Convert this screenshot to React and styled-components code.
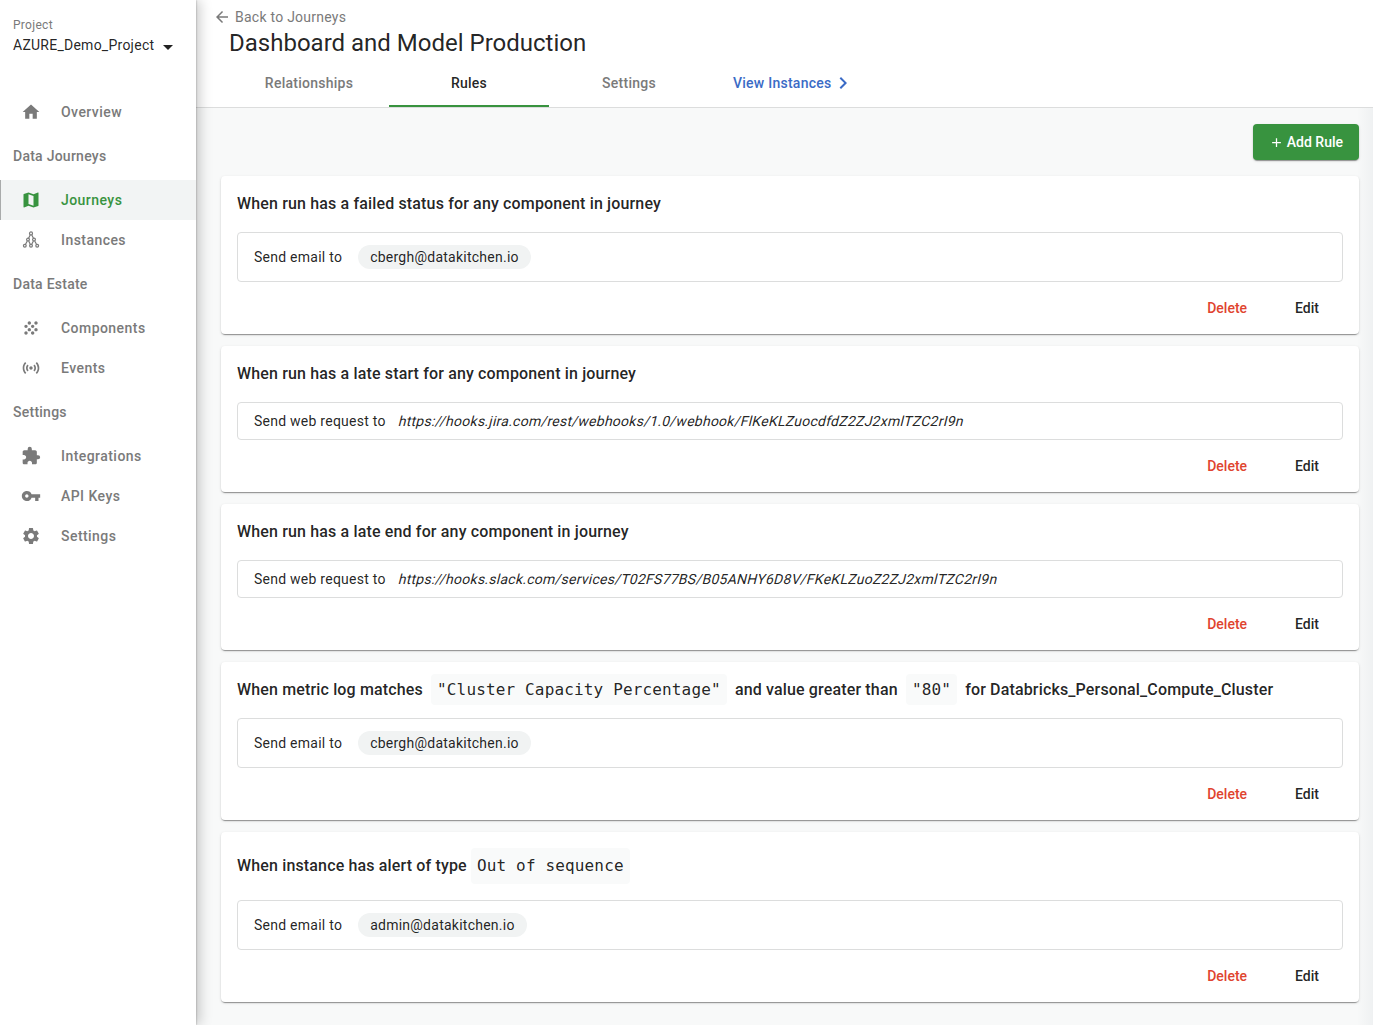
import React from 'react';
import styled, { createGlobalStyle, css } from 'styled-components';
import {
  MdHome, MdMap, MdGrain, MdSensors, MdExtension, MdVpnKey, MdSettings,
  MdArrowBack, MdArrowDropDown, MdChevronRight, MdAdd,
} from 'react-icons/md';

const Global = createGlobalStyle`
  *, *::before, *::after { box-sizing: border-box; }
  body {
    margin: 0;
    font-family: Roboto, "Liberation Sans", sans-serif;
    color: rgba(0, 0, 0, 0.87);
    background: #f8f9f9;
  }
`;

const Layout = styled.div`
  display: flex;
  height: 1025px;
  overflow: hidden;
`;

const Sidebar = styled.nav`
  position: relative;
  z-index: 2;
  flex: 0 0 196px;
  display: flex;
  flex-direction: column;
  background: #fff;
  box-shadow: 0 0 2px rgba(0, 0, 0, 0.35), 4px 0 12px rgba(0, 0, 0, 0.2);
`;

const ProjectPicker = styled.div`
  height: 92px;
  padding: 17px 13px 0;
`;

const ProjectLabel = styled.div`
  font-size: 12px;
  line-height: 16px;
  letter-spacing: 0.3px;
  color: #7a7a7a;
`;

const ProjectName = styled.div`
  display: flex;
  align-items: center;
  gap: 2px;
  height: 20px;
  margin-top: 2px;
  font-size: 14px;
  line-height: 20px;
  letter-spacing: 0.25px;
  white-space: nowrap;

  svg { margin-top: 3px; }
`;

const SectionLabel = styled.div`
  height: 48px;
  padding-left: 13px;
  font-size: 14px;
  font-weight: 500;
  line-height: 48px;
  letter-spacing: 0.25px;
  color: #7a7a7a;
`;

const NavItem = styled.a`
  display: flex;
  align-items: center;
  gap: 20px;
  height: 40px;
  padding-left: 21px;
  font-size: 14px;
  font-weight: 500;
  letter-spacing: 0.45px;
  color: #7a7a7a;

  svg { flex: none; }

  ${(p) => p.$active && css`
    padding-left: 20px;
    border-left: 1px solid #a9abab;
    background: #f2f4f4;
    color: #38933f;
  `}
`;

const Main = styled.main`
  flex: 1;
  min-width: 0;
  display: flex;
  flex-direction: column;
`;

const Header = styled.header`
  height: 108px;
  background: #fff;
  border-bottom: 1px solid #dcdddd;
`;

const BackLink = styled.a`
  display: flex;
  align-items: center;
  gap: 4px;
  padding: 7px 0 0 17px;
  font-size: 14px;
  line-height: 20px;
  letter-spacing: 0.25px;
  color: #7a7a7a;
`;

const Title = styled.h1`
  margin: 0;
  padding-left: 33px;
  font-size: 24px;
  font-weight: 400;
  line-height: 32px;
`;

const Tabs = styled.div`
  display: flex;
  padding-left: 33px;
`;

const Tab = styled.div`
  width: 160px;
  height: 48px;
  border-bottom: 2px solid ${(p) => (p.$active ? '#38933f' : 'transparent')};
  color: ${(p) => (p.$active ? 'rgba(0, 0, 0, 0.87)' : '#7a7a7a')};
  font-size: 14px;
  font-weight: 500;
  line-height: 48px;
  letter-spacing: 0.25px;
  text-align: center;
`;

const InstancesLink = styled.a`
  display: flex;
  align-items: center;
  height: 48px;
  padding-left: 24px;
  font-size: 14px;
  font-weight: 500;
  letter-spacing: 0.25px;
  color: #3a6bc6;
`;

const Content = styled.section`
  flex: 1;
  display: flex;
  flex-direction: column;
  gap: 12px;
  padding: 16px 14px 0 25px;
  background: linear-gradient(to left, #eff1f2, #f8f9f9 16px);
`;

const raised = css`
  box-shadow: 0 3px 1px -2px rgba(0, 0, 0, 0.2), 0 1px 1px rgba(0, 0, 0, 0.2), 0 1px 3px rgba(0, 0, 0, 0.12);
`;

const AddButton = styled.button`
  align-self: flex-end;
  display: flex;
  align-items: center;
  gap: 3px;
  height: 36px;
  margin-bottom: 4px;
  padding: 0 16px;
  border: 0;
  border-radius: 4px;
  background: #38933f;
  color: #fff;
  font: 500 14px Roboto, sans-serif;
  ${raised}
`;

const Card = styled.article`
  padding: 16px 16px 8px;
  border-radius: 4px;
  background: #fff;
  ${raised}
`;

const Condition = styled.h2`
  margin: 0 0 16px;
  font-size: 16px;
  font-weight: 500;
  line-height: 24px;
  letter-spacing: 0.15px;
`;

const Code = styled.code`
  display: ${(p) => (p.$block ? 'inline-block' : 'inline')};
  vertical-align: ${(p) => (p.$block ? 'top' : 'baseline')};
  margin: ${(p) => (p.$block ? '0' : '0 4px')};
  padding: 6px;
  border-radius: 4px;
  background: #f9fafa;
  font-family: "DejaVu Sans Mono", monospace;
  font-size: 16px;
  font-weight: 400;
`;

const BlockCondition = styled(Condition)`
  height: 36px;
  line-height: 36px;

  ${Code} { line-height: 24px; }
`;

const Action = styled.div`
  display: flex;
  align-items: center;
  gap: ${(p) => (p.$tall ? 16 : 12)}px;
  height: ${(p) => (p.$tall ? 50 : 38)}px;
  padding: 0 16px;
  border: 1px solid #dcdddd;
  border-radius: 4px;
  font-size: 14px;
  letter-spacing: 0.25px;
`;

const Chip = styled.span`
  height: 24px;
  padding: 0 12px;
  border-radius: 12px;
  background: #f1f3f3;
  line-height: 24px;
`;

/* Slanted upright glyphs keep the regular-face widths. */
const Url = styled.span`
  display: inline-block;
  transform: skewX(-14deg);
  transform-origin: 0 75%;
`;

const Footer = styled.footer`
  display: flex;
  justify-content: flex-end;
  gap: 16px;
  margin-top: 8px;
  padding-right: 8px;
`;

const TextButton = styled.button`
  height: 36px;
  padding: 0 16px;
  border: 0;
  background: none;
  color: ${(p) => (p.$danger ? '#e0442f' : 'rgba(0, 0, 0, 0.87)')};
  font: 500 14px Roboto, sans-serif;
`;

const TreeIcon = () => (
  <svg width="20" height="20" viewBox="0 0 20 20" fill="none" stroke="currentColor" strokeWidth="1.2">
    <circle cx="10" cy="3.4" r="1.5" />
    <circle cx="7" cy="9.6" r="1.4" />
    <circle cx="13" cy="9.6" r="1.4" />
    <circle cx="3.8" cy="15.8" r="1.4" />
    <circle cx="10" cy="15.8" r="1.4" />
    <circle cx="16.2" cy="15.8" r="1.4" />
    <path d="M9.3 4.8 7.6 8.2M10.7 4.8l1.7 3.4M6.3 10.9 4.4 14.6M13.7 10.9l1.9 3.7M7.7 10.9l1.7 3.6M12.4 10.9l-1.8 3.6" />
  </svg>
);

const NAV = [
  { label: 'Overview', Icon: MdHome },
  { section: 'Data Journeys' },
  { label: 'Journeys', Icon: MdMap, active: true },
  { label: 'Instances', Icon: TreeIcon },
  { section: 'Data Estate' },
  { label: 'Components', Icon: MdGrain },
  { label: 'Events', Icon: MdSensors },
  { section: 'Settings' },
  { label: 'Integrations', Icon: MdExtension },
  { label: 'API Keys', Icon: MdVpnKey },
  { label: 'Settings', Icon: MdSettings },
];

const RULES = [
  {
    condition: <Condition>When run has a failed status for any component in journey</Condition>,
    email: 'cbergh@datakitchen.io',
  },
  {
    condition: <Condition>When run has a late start for any component in journey</Condition>,
    url: 'https://hooks.jira.com/rest/webhooks/1.0/webhook/FlKeKLZuocdfdZ2ZJ2xmlTZC2rI9n',
  },
  {
    condition: <Condition>When run has a late end for any component in journey</Condition>,
    url: 'https://hooks.slack.com/services/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',
  },
  {
    condition: (
      <Condition>
        When metric log matches <Code>"Cluster Capacity Percentage"</Code> and value greater than{' '}
        <Code>"80"</Code> for Databricks_Personal_Compute_Cluster
      </Condition>
    ),
    email: 'cbergh@datakitchen.io',
  },
  {
    condition: (
      <BlockCondition>
        When instance has alert of type <Code $block>Out of sequence</Code>
      </BlockCondition>
    ),
    email: 'admin@datakitchen.io',
  },
];

const Rule = ({ condition, email, url }) => (
  <Card>
    {condition}
    <Action $tall={!!email}>
      <span>{email ? 'Send email to' : 'Send web request to'}</span>
      {email ? <Chip>{email}</Chip> : <Url>{url}</Url>}
    </Action>
    <Footer>
      <TextButton $danger>Delete</TextButton>
      <TextButton>Edit</TextButton>
    </Footer>
  </Card>
);

export default function App() {
  return (
    <>
      <Global />
      <Layout>
        <Sidebar>
          <ProjectPicker>
            <ProjectLabel>Project</ProjectLabel>
            <ProjectName>
              AZURE_Demo_Project
              <MdArrowDropDown size={24} />
            </ProjectName>
          </ProjectPicker>
          {NAV.map(({ section, label, Icon, active }) =>
            section ? (
              <SectionLabel key={'s' + section}>{section}</SectionLabel>
            ) : (
              <NavItem key={label} $active={active}>
                <Icon size={20} />
                {label}
              </NavItem>
            )
          )}
        </Sidebar>
        <Main>
          <Header>
            <BackLink>
              <MdArrowBack size={18} />
              Back to Journeys
            </BackLink>
            <Title>Dashboard and Model Production</Title>
            <Tabs>
              <Tab>Relationships</Tab>
              <Tab $active>Rules</Tab>
              <Tab>Settings</Tab>
              <InstancesLink>
                View Instances
                <MdChevronRight size={24} />
              </InstancesLink>
            </Tabs>
          </Header>
          <Content>
            <AddButton>
              <MdAdd size={15} />
              Add Rule
            </AddButton>
            {RULES.map((rule, i) => (
              <Rule key={i} {...rule} />
            ))}
          </Content>
        </Main>
      </Layout>
    </>
  );
}
